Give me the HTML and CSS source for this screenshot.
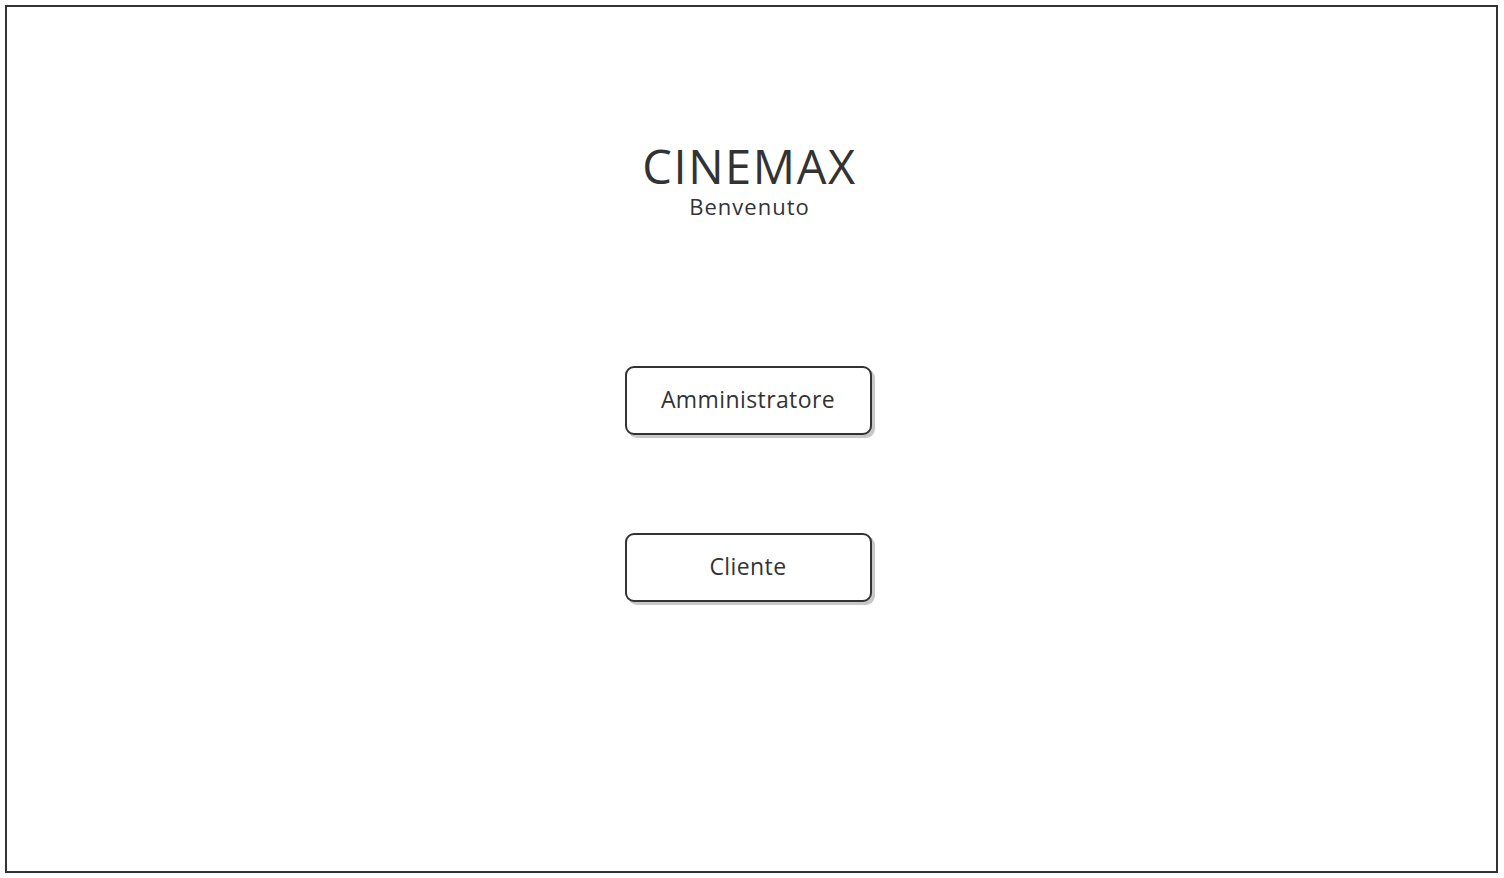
FILE: index.html
```html
<!DOCTYPE html>
<html lang="it">
<head>
<meta charset="utf-8">
<title>CINEMAX</title>
<link rel="stylesheet" href="styles.css">
</head>
<body>
<div class="frame">
  <header class="brand">
    <h1 class="title">CINEMAX</h1>
    <p class="subtitle">Benvenuto</p>
  </header>
  <nav class="actions">
    <button class="btn" type="button">Amministratore</button>
    <button class="btn" type="button">Cliente</button>
  </nav>
</div>
</body>
</html>
```
FILE: styles.css
```css
html, body {
  margin: 0;
  padding: 0;
  background: #fff;
}
body {
  font-family: "Open Sans", "Noto Sans", sans-serif;
  color: #333;
}
.frame {
  box-sizing: border-box;
  margin: 5px 6px 5px 5px;
  height: 868px;
  border: 2px solid #333;
  display: flex;
  flex-direction: column;
  align-items: center;
}
.brand {
  margin-top: 135px;
  display: flex;
  flex-direction: column;
  align-items: center;
  margin-left: -4px;
}
.title {
  margin: 0;
  font-size: 47px;
  font-weight: 500;
  line-height: 48px;
  letter-spacing: 1.6px;
}
.subtitle {
  margin: 4px 0 0;
  font-size: 22px;
  font-weight: 500;
  line-height: 24px;
  letter-spacing: 1px;
}
.actions {
  margin-top: 148px;
  display: flex;
  flex-direction: column;
  align-items: center;
  gap: 98px;
}
.btn {
  box-sizing: border-box;
  width: 247px;
  height: 69px;
  border: 2px solid #333;
  border-radius: 9px;
  background: #fff;
  box-shadow: 3px 3px 0 #c8c8c8;
  font-family: inherit;
  font-size: 23px;
  font-weight: 500;
  letter-spacing: 0.4px;
  color: #333;
  padding: 0 0 4px;
  margin-left: -7px;
}
```
